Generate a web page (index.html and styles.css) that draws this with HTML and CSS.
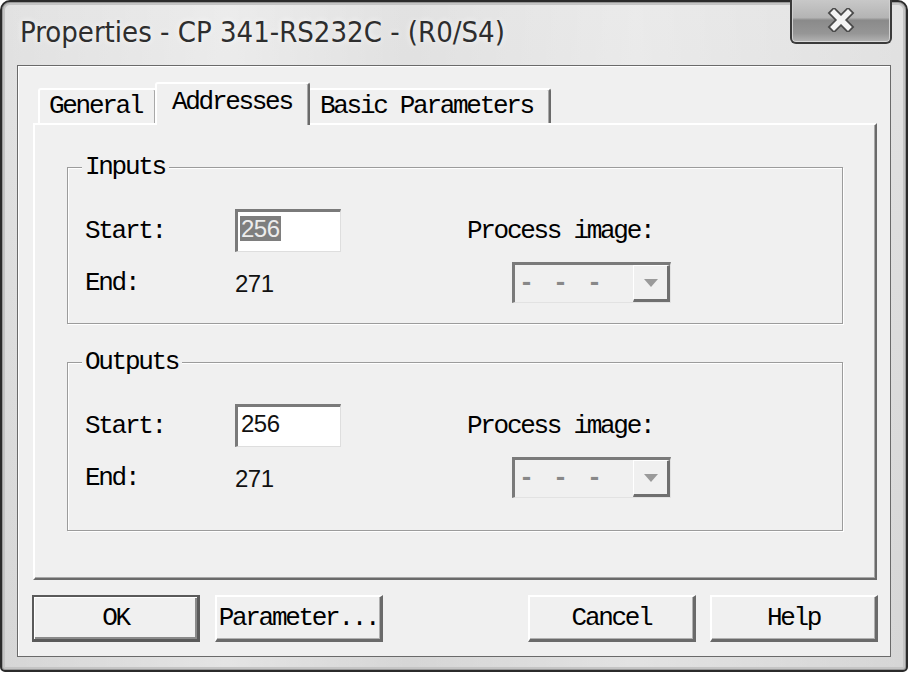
FILE: index.html
```html
<!DOCTYPE html>
<html lang="en">
<head>
<meta charset="utf-8">
<title>Properties - CP 341-RS232C - (R0/S4)</title>
<link rel="stylesheet" href="styles.css">
</head>
<body>
<div class="window">
  <div class="titlebar">
    <span class="title">Properties - CP 341-RS232C - (R0/S4)</span>
    <div class="close">
      <svg width="28" height="24" viewBox="0 0 28 24">
        <path d="M7 5 L21 19 M21 5 L7 19" stroke="#4a4a4a" stroke-width="9" stroke-linecap="square" fill="none"/>
        <path d="M7 5 L21 19 M21 5 L7 19" stroke="#f4f4f4" stroke-width="5.5" stroke-linecap="square" fill="none"/>
      </svg>
    </div>
  </div>
  <div class="client">
    <div class="tabs">
      <div class="tab tab-general">General</div>
      <div class="tab tab-active">Addresses</div>
      <div class="tab tab-basic">Basic Parameters</div>
    </div>
    <div class="page">
      <fieldset class="group group-in">
        <legend>Inputs</legend>
        <div class="grid">
          <span class="lbl">Start:</span>
          <div class="field"><span class="sel">256</span></div>
          <span class="lbl">Process image:</span>
          <span class="lbl">End:</span>
          <span class="num">271</span>
          <div class="combo"><span class="combo-text">- - -</span><span class="drop"><span class="arrow"></span></span></div>
        </div>
      </fieldset>
      <fieldset class="group group-out">
        <legend>Outputs</legend>
        <div class="grid">
          <span class="lbl">Start:</span>
          <div class="field"><span class="val">256</span></div>
          <span class="lbl">Process image:</span>
          <span class="lbl">End:</span>
          <span class="num">271</span>
          <div class="combo"><span class="combo-text">- - -</span><span class="drop"><span class="arrow"></span></span></div>
        </div>
      </fieldset>
    </div>
    <div class="buttons">
      <div class="btn btn-default">OK</div>
      <div class="btn btn-param">Parameter...</div>
      <div class="btn btn-cancel">Cancel</div>
      <div class="btn btn-help">Help</div>
    </div>
  </div>
</div>
</body>
</html>
```
FILE: styles.css
```css
html, body {
  margin: 0;
  padding: 0;
  background: #ffffff;
}

.window {
  box-sizing: border-box;
  width: 908px;
  height: 672px;
  border: 2px solid #2b2b2b;
  border-radius: 10px 10px 5px 5px;
  background:
    linear-gradient(90deg, rgba(255,255,255,0) 0%, rgba(255,255,255,0.35) 25%, rgba(255,255,255,0) 45%, rgba(255,255,255,0.3) 70%, rgba(255,255,255,0) 100%),
    linear-gradient(180deg, #e2e2e2 0%, #d6d6d6 100%);
  box-shadow: inset 0 0 0 1px #9a9a9a, inset 0 0 0 3px #c4c4c4;
  display: flex;
  flex-direction: column;
}

.titlebar {
  height: 63px;
  display: flex;
  align-items: center;
  padding-left: 18px;
  flex: none;
}

.title {
  font-family: "Liberation Sans Narrow", "DejaVu Sans Condensed", "Liberation Sans", sans-serif;
  font-size: 29px;
  color: #2e2e2e;
  margin-top: -4px;
  text-shadow: 0 0 6px rgba(255,255,255,0.9);
}

.close {
  margin-left: auto;
  margin-right: 14px;
  margin-top: -2px;
  align-self: flex-start;
  box-sizing: border-box;
  width: 102px;
  height: 44px;
  border: 2px solid #3a3a3a;
  border-top: none;
  border-radius: 0 0 6px 6px;
  background: linear-gradient(180deg, #c8c8c8 0%, #b4b4b4 42%, #8a8a8a 48%, #969696 80%, #b4b4b4 100%);
  box-shadow: inset 0 -1px 0 #d8d8d8, inset 1px 0 0 #d0d0d0, inset -1px 0 0 #d0d0d0;
  display: flex;
  align-items: center;
  justify-content: center;
}

.close svg {
  display: block;
  margin-top: -2px;
}

.client {
  flex: 1;
  margin: 0 15px 13px 15px;
  border: 1px solid #6a6a6a;
  background: #f0f0f0;
  box-shadow: inset 1px 1px 0 #ffffff;
  display: flex;
  flex-direction: column;
  padding-left: 15px;
}

.tabs {
  display: flex;
  align-items: flex-end;
  height: 41px;
  margin-top: 16px;
  margin-left: 5px;
  position: relative;
  z-index: 1;
}

.tab,
.lbl,
.btn,
legend {
  font-family: "Liberation Mono", "DejaVu Sans Mono", monospace;
  font-size: 26px;
  letter-spacing: -2.3px;
  color: #000;
}

.tab {
  box-sizing: border-box;
  height: 35px;
  background: #f0f0f0;
  border-top: 2px solid #ffffff;
  border-left: 2px solid #ffffff;
  border-right: 2px solid #6a6a6a;
  border-radius: 3px 3px 0 0;
  box-shadow: inset -1px 0 0 #a8a8a8;
  line-height: 33px;
  padding-left: 9px;
  white-space: nowrap;
}

.tab-general {
  width: 119px;
}

.tab-active {
  width: 155px;
  height: 43px;
  margin-left: -2px;
  margin-right: -2px;
  margin-bottom: -2px;
  padding-left: 15px;
  line-height: 36px;
  padding-bottom: 5px;
  position: relative;
  z-index: 2;
}

.tab-basic {
  width: 243px;
  padding-left: 10px;
}

.page {
  box-sizing: border-box;
  width: 844px;
  height: 457px;
  border-top: 2px solid #ffffff;
  border-left: 2px solid #ffffff;
  border-right: 2px solid #6a6a6a;
  border-bottom: 2px solid #6a6a6a;
  box-shadow: inset -1px -1px 0 #a8a8a8;
  padding-left: 32px;
  padding-top: 30px;
  display: flex;
  flex-direction: column;
}

.group {
  box-sizing: border-box;
  width: 776px;
  margin: 0;
  border: 1px solid #9c9c9c;
  box-shadow: inset 1px 1px 0 #ffffff, 1px 1px 0 #ffffff;
  padding: 30px 0 20px 17px;
  min-width: 0;
}

.group-out {
  margin-top: 26px;
  padding-bottom: 32px;
}

legend {
  line-height: 24px;
  padding: 0 4px 0 3px;
  margin-left: -3px;
  background: #f0f0f0;
}

.grid {
  display: grid;
  grid-template-columns: 150px 232px auto;
  grid-template-rows: 43px 41px;
  row-gap: 10px;
  align-items: center;
  justify-items: start;
}

.lbl {
  line-height: 28px;
}

.num,
.field {
  font-family: "Liberation Sans", "Arial", sans-serif;
  font-size: 24px;
  color: #111;
}

.num {
  letter-spacing: -0.5px;
  margin-top: 2px;
}

.field {
  box-sizing: border-box;
  width: 106px;
  height: 43px;
  background: #ffffff;
  border-top: 3px solid #7a7a7a;
  border-left: 3px solid #7a7a7a;
  border-right: 1px solid #dedede;
  border-bottom: 1px solid #dedede;
  padding: 4px 0 0 2px;
  display: flex;
  align-items: flex-start;
}

.sel {
  background: #7e7e7e;
  color: #ececec;
  line-height: 25px;
  padding: 0 1px;
  letter-spacing: -0.5px;
}

.val {
  line-height: 25px;
  padding: 0 1px;
  letter-spacing: -0.5px;
}

.combo {
  box-sizing: border-box;
  width: 159px;
  height: 41px;
  margin-left: 45px;
  background: #f0f0f0;
  border-top: 3px solid #7a7a7a;
  border-left: 3px solid #7a7a7a;
  border-right: 1px solid #e2e2e2;
  border-bottom: 1px solid #e2e2e2;
  display: flex;
  align-items: center;
  justify-content: space-between;
}

.combo-text {
  font-family: "Liberation Mono", "DejaVu Sans Mono", monospace;
  font-size: 25px;
  font-weight: bold;
  color: #888888;
  padding-left: 4px;
  letter-spacing: 2px;
}

.drop {
  box-sizing: border-box;
  width: 37px;
  height: 37px;
  background: #f0f0f0;
  border-top: 1px solid #ffffff;
  border-left: 1px solid #ffffff;
  border-right: 3px solid #6f6f6f;
  border-bottom: 3px solid #6f6f6f;
  display: flex;
  align-items: center;
  justify-content: center;
}

.arrow {
  width: 0;
  height: 0;
  border-left: 7px solid transparent;
  border-right: 7px solid transparent;
  border-top: 8px solid #9a9a9a;
}

.buttons {
  display: flex;
  margin-top: 15px;
  margin-left: -1px;
}

.btn {
  box-sizing: border-box;
  width: 168px;
  height: 47px;
  background: #f0f0f0;
  border-top: 2px solid #ffffff;
  border-left: 2px solid #ffffff;
  border-right: 3px solid #6a6a6a;
  border-bottom: 3px solid #6a6a6a;
  box-shadow: inset -1px -1px 0 #b0b0b0;
  display: flex;
  align-items: center;
  justify-content: center;
  white-space: nowrap;
}

.btn-default {
  border: 2px solid #5a5a5a;
  border-right-width: 3px;
  border-bottom-width: 3px;
  box-shadow: inset 1px 1px 0 #ffffff, inset -2px -2px 0 #8a8a8a;
}

.btn-param {
  margin-left: 15px;
}

.btn-cancel {
  margin-left: auto;
}

.btn-help {
  margin-left: 14px;
  margin-right: 12px;
}
```
